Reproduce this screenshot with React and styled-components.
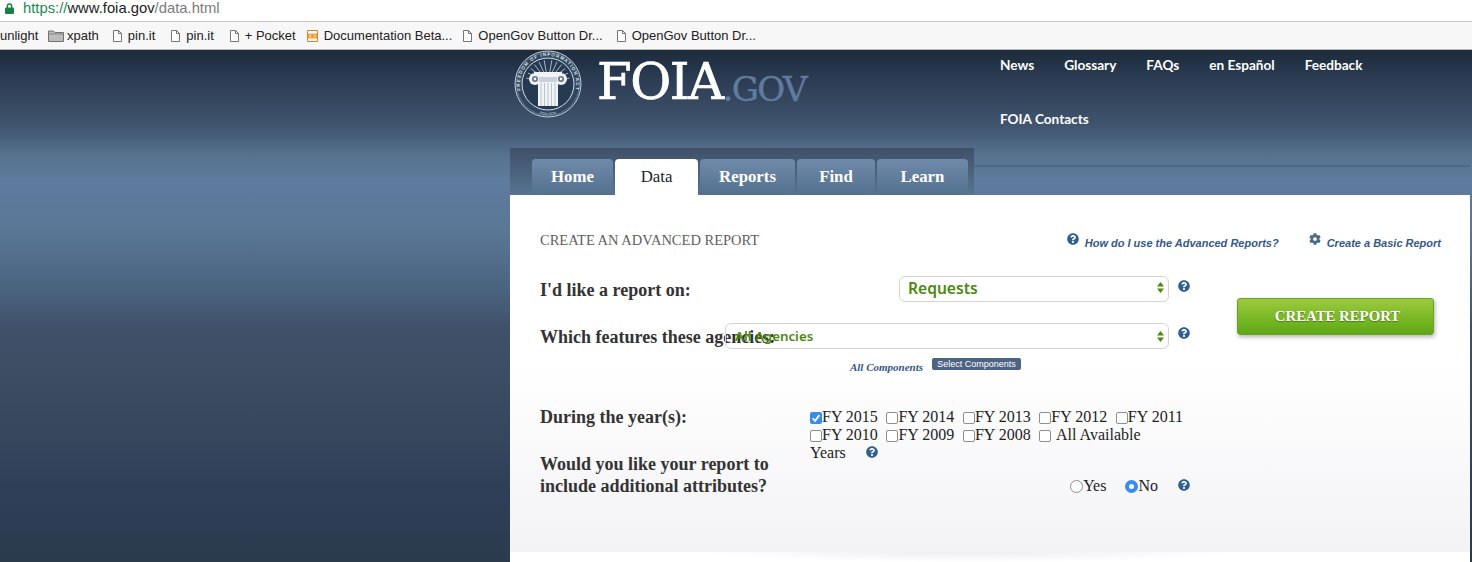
import React from 'react';
import styled, { createGlobalStyle } from 'styled-components';
import { FaQuestionCircle, FaCog } from 'react-icons/fa';

const SERIF = '"Liberation Serif", serif';
const SANS = '"Liberation Sans", sans-serif';
const GREEN = '#4c8a0e';

const years = ['FY 2015', 'FY 2014', 'FY 2013', 'FY 2012', 'FY 2011', 'FY 2010', 'FY 2009', 'FY 2008'];
const tabs = [
    { name: 'Home', width: 81 },
    { name: 'Data', width: 83, active: true },
    { name: 'Reports', width: 95 },
    { name: 'Find', width: 78 },
    { name: 'Learn', width: 91 },
];
const marks = [
    { name: 'xpath', folder: true, gap: 14 },
    { name: 'pin.it', gap: 16 },
    { name: 'pin.it', gap: 16 },
    { name: '+ Pocket', gap: 11 },
    { name: 'Documentation Beta...', code: true, gap: 11 },
    { name: 'OpenGov Button Dr...', gap: 14 },
    { name: 'OpenGov Button Dr...', gap: 0 },
];

const Seal = () => (
    <SealSvg viewBox="0 0 68 68">
        <defs>
            <path id="sealTop" d="M9.75 48A28 28 0 1 1 58.25 48" />
            <path id="sealBottom" d="M14 57.7A31 31 0 0 0 54 57.7" />
        </defs>
        <circle cx="34" cy="34" r="33" fill="#2f4660" stroke="#c4cfda" strokeWidth="1" />
        <circle cx="34" cy="34" r="31.5" fill="none" stroke="#8fa1b4" strokeWidth="0.5" />
        <circle cx="34" cy="34" r="26" fill="#263a52" stroke="#d5dde5" strokeWidth="1" />
        <text fontFamily={SANS} fontSize="4.6" fontWeight="700" fill="#dde3ea" letterSpacing="1" textAnchor="middle">
            <textPath href="#sealTop" startOffset="50%">FREEDOM OF INFORMATION ACT</textPath>
        </text>
        <text fontFamily={SANS} fontSize="3.5" fill="#dde3ea" textAnchor="middle">
            <textPath href="#sealBottom" startOffset="50%">FOIA.GOV</textPath>
        </text>
        <g stroke="#aebccb" strokeWidth="0.9">
            {[-80, -66, -52, -38, -24, -10, 10, 24, 38, 52, 66, 80].map(a => (
                <line key={a} x1="34" y1="32" x2="34" y2="10" transform={`rotate(${a} 34 32)`} />
            ))}
        </g>
        <path d="M20 22h28v5H20z" fill="#f1f3f5" />
        <circle cx="21" cy="29" r="6" fill="#f1f3f5" />
        <circle cx="47" cy="29" r="6" fill="#f1f3f5" />
        <circle cx="21" cy="29" r="3" fill="#5c7085" />
        <circle cx="47" cy="29" r="3" fill="#5c7085" />
        <circle cx="21" cy="29" r="1.4" fill="#f1f3f5" />
        <circle cx="47" cy="29" r="1.4" fill="#f1f3f5" />
        <path d="M25 27h18v5H25z" fill="#c8d1da" />
        <path d="M24 32h20v24H24z" fill="#f1f3f5" />
        <g stroke="#aab6c3" strokeWidth="0.8">
            <line x1="27" y1="33" x2="27" y2="56" />
            <line x1="30.5" y1="33" x2="30.5" y2="56" />
            <line x1="34" y1="33" x2="34" y2="56" />
            <line x1="37.5" y1="33" x2="37.5" y2="56" />
            <line x1="41" y1="33" x2="41" y2="56" />
        </g>
    </SealSvg>
);

const DocIcon = () => (
    <MarkSvg width="9" height="12" viewBox="0 0 9 12">
        <path d="M.5.5h5l3 3v8h-8zM5.5.5v3h3" fill="#fff" stroke="#666" strokeWidth="0.9" />
    </MarkSvg>
);

const FolderIcon = () => (
    <MarkSvg width="16" height="12" viewBox="0 0 16 12">
        <path d="M.5 11.5V1h5L7 2.5h8.5v9z" fill="#bdbdbd" stroke="#666" strokeWidth="0.9" />
        <path d="M1 4h14" stroke="#777" strokeWidth="0.8" />
    </MarkSvg>
);

const CodeIcon = () => (
    <MarkSvg width="11" height="12" viewBox="0 0 11 12">
        <path d="M.5.5h10v11H.5z" fill="#fff" stroke="#e8811f" />
        <path d="M1 3.5h9v5H1z" fill="#f09a3e" />
        <path d="M4 4.5L2.5 6 4 7.5M7 4.5L8.5 6 7 7.5" fill="none" stroke="#fff" strokeWidth="0.9" />
    </MarkSvg>
);

const LockIcon = () => (
    <svg width="9" height="11" viewBox="0 0 9 11">
        <path d="M2.3 5V3.200a2.200 2.200 0 0 1 4.400 0V5" fill="none" stroke="#1c8043" strokeWidth="1.4" />
        <rect y="4.5" width="9" height="6.5" rx="1" fill="#1c8043" />
    </svg>
);

const Spinner = () => (
    <Arrows viewBox="0 0 7 11" width="7" height="11">
        <path d="M3.5 0L7 4.5H0zM3.5 11L0 6.5h7z" fill={GREEN} />
    </Arrows>
);

const Tick = () => (
    <svg width="10" height="10" viewBox="0 0 10 10">
        <path d="M2.2 5.200l2 2.200 3.600-4.800" fill="none" stroke="#fff" strokeWidth="1.5" />
    </svg>
);

const Help = ({ tight }) => <HelpMark $tight={tight}><FaQuestionCircle /></HelpMark>;

const App = () => {
    return (
        <Screen>
            <Reset />
            <AddressBar>
                <LockIcon />
                <Url><Scheme>https://</Scheme>www.foia.gov<Path>/data.html</Path></Url>
            </AddressBar>
            <Bookmarks>
                <Clipped>unlight</Clipped>
                {marks.map((m, i) => (
                    <Mark key={i} $gap={m.gap} $tight={m.folder}>
                        {m.folder ? <FolderIcon /> : m.code ? <CodeIcon /> : <DocIcon />}
                        {m.name}
                    </Mark>
                ))}
            </Bookmarks>
            <Page>
                <Wrap>
                    <Header>
                        <Logo>
                            <Seal />
                            <Wordmark>FOIA<Gov>.GOV</Gov></Wordmark>
                        </Logo>
                        <Nav>
                            <NavLink>News</NavLink>
                            <NavLink>Glossary</NavLink>
                            <NavLink>FAQs</NavLink>
                            <NavLink>en Español</NavLink>
                            <NavLink>Feedback</NavLink>
                            <NavLink>FOIA Contacts</NavLink>
                        </Nav>
                    </Header>
                    <TabBar>
                        <TabStrip>
                            {tabs.map(t => (
                                <Tab key={t.name} $width={t.width} $active={t.active}>{t.name}</Tab>
                            ))}
                        </TabStrip>
                        <TabRule />
                    </TabBar>
                    <Panel>
                        <PanelTop>
                            <Title>CREATE AN ADVANCED REPORT</Title>
                            <TopLinks>
                                <TopLink $icon="#2f5f93"><FaQuestionCircle />How do I use the Advanced Reports?</TopLink>
                                <TopLink $icon="#4e6a8a"><FaCog />Create a Basic Report</TopLink>
                            </TopLinks>
                        </PanelTop>
                        <Columns>
                            <Form>
                                <SelectRow>
                                    <Label>I'd like a report on:</Label>
                                    <FakeSelect $width={270} $big>Requests<Spinner /></FakeSelect>
                                    <Help />
                                </SelectRow>
                                <SelectRow>
                                    <Label>Which features these agencies:</Label>
                                    <FakeSelect $width={444}>All Agencies<Spinner /></FakeSelect>
                                    <Help />
                                </SelectRow>
                                <Components>
                                    <AllComponents>All Components</AllComponents>
                                    <SmallButton>Select Components</SmallButton>
                                </Components>
                                <YearsRow>
                                    <YearsLabel>During the year(s):</YearsLabel>
                                    <YearList>
                                        {years.map((y, i) => (
                                            <React.Fragment key={y}>
                                                <Year><Box $on={i === 0}>{i === 0 && <Tick />}</Box>{y}</Year>{' '}
                                            </React.Fragment>
                                        ))}
                                        <Year><Box /></Year>All Available{' '}
                                        <NoWrap>Years<Help tight /></NoWrap>
                                    </YearList>
                                </YearsRow>
                                <AttrRow>
                                    <AttrLabel>Would you like your report to include additional attributes?</AttrLabel>
                                    <Radios>
                                        <RadioItem><Radio />Yes</RadioItem>
                                        <RadioItem><Radio $on />No</RadioItem>
                                        <Help />
                                    </Radios>
                                </AttrRow>
                            </Form>
                            <CreateButton>CREATE REPORT</CreateButton>
                        </Columns>
                    </Panel>
                    <Foot />
                </Wrap>
            </Page>
        </Screen>
    );
};

//styled components
const Reset = createGlobalStyle`
html, body {
    margin: 0;
    padding: 0;
    background: #fff;
}
body {
    font-family: ${SERIF};
}
`;

const Screen = styled.div`
width: 1472px;
height: 562px;
overflow: hidden;
display: flex;
flex-direction: column;
`;

const AddressBar = styled.div`
height: 21px;
display: flex;
align-items: center;
gap: 9px;
padding-left: 5px;
background: #fff;
border-bottom: 1px solid #c6c6c6;
svg{
    margin-top: -4px;
}
`;

const Url = styled.div`
font: 14.8px ${SANS};
color: #222;
margin-top: -6px;
`;

const Scheme = styled.span`
color: #1c8a55;
`;

const Path = styled.span`
color: #7b7b7b;
`;

const Bookmarks = styled.div`
height: 27px;
display: flex;
align-items: center;
background: #f7f7f7;
border-bottom: 1px solid #b9b9b9;
font: 13px ${SANS};
color: #222;
white-space: nowrap;
`;

const Clipped = styled.span`
width: 48px;
`;

const Mark = styled.span`
display: flex;
align-items: center;
gap: ${p => (p.$tight ? 3 : 6)}px;
margin-right: ${p => p.$gap}px;
`;

const MarkSvg = styled.svg`
flex: none;
`;

const Page = styled.div`
flex: 1;
padding-left: 510px;
padding-right: 2px;
background: linear-gradient(#1c2c3b 0, #2c3c54 30px, #42566f 78px, #56728f 105px, #5f7b9e 130px, #5a7796 180px, #4a647f 240px, #3f5068 280px, #38495f 370px, #2f3f58 440px, #2b3b4c 512px);
`;

const Wrap = styled.div`
width: 960px;
`;

const Header = styled.div`
height: 98px;
display: flex;
justify-content: space-between;
`;

const Logo = styled.div`
display: flex;
align-items: flex-start;
padding-left: 4px;
`;

const SealSvg = styled.svg`
width: 68px;
height: 68px;
flex: none;
`;

const Wordmark = styled.div`
font: 50px/1 "DejaVu Serif", serif;
color: #fff;
-webkit-text-stroke: 0.7px #fff;
margin: 7px 0 0 15px;
letter-spacing: -1.5px;
white-space: nowrap;
`;

const Gov = styled.span`
font-size: 34px;
color: #5f7b9e;
-webkit-text-stroke: 0.5px #5f7b9e;
letter-spacing: -1.6px;
vertical-align: -2px;
`;

const Nav = styled.div`
width: 470px;
display: flex;
flex-wrap: wrap;
align-content: flex-start;
column-gap: 30px;
row-gap: 24px;
`;

const NavLink = styled.a`
font: 700 13.6px/30px Lato, sans-serif;
color: #fff;
`;

const TabBar = styled.div`
display: flex;
height: 47px;
`;

const TabStrip = styled.div`
width: 464px;
padding: 11px 0 0 22px;
box-sizing: border-box;
display: flex;
gap: 2px;
background: linear-gradient(#3f5068, #587491);
`;

const Tab = styled.div`
width: ${p => p.$width}px;
height: 36px;
border-radius: 4px 4px 0 0;
display: flex;
align-items: center;
justify-content: center;
font-size: 16.8px;
font-weight: ${p => (p.$active ? 400 : 700)};
color: ${p => (p.$active ? '#1c2430' : '#fff')};
background: ${p => (p.$active ? '#fff' : 'linear-gradient(#708baa, #54708f)')};
`;

const TabRule = styled.div`
flex: 1;
margin-top: 17px;
border-top: 2px solid #4d6785;
`;

const Panel = styled.div`
height: 357px;
box-sizing: border-box;
padding: 36px 29px 0 30px;
background: linear-gradient(#fff 0, #fff 170px, #f3f3f6 100%);
`;

const PanelTop = styled.div`
display: flex;
justify-content: space-between;
align-items: center;
height: 20px;
`;

const Title = styled.h2`
margin: -2px 0 0;
font: 400 14.5px ${SERIF};
color: #5f5f5f;
`;

const TopLinks = styled.div`
display: flex;
gap: 30px;
margin-top: 4px;
`;

const TopLink = styled.a`
display: flex;
align-items: center;
gap: 6px;
font: italic 700 11px ${SANS};
color: #34588a;
svg{
    width: 12px;
    height: 12px;
    margin-top: -8px;
    color: ${p => p.$icon};
}
`;

const Columns = styled.div`
display: flex;
align-items: flex-start;
`;

const Form = styled.div`
width: 650px;
`;

const Label = styled.label`
font: 700 18px ${SERIF};
color: #333;
white-space: nowrap;
width: 185px;
margin-top: 2px;
`;

const SelectRow = styled.div`
display: flex;
align-items: center;
margin-top: 21px;
height: 26px;
&:first-child{
    margin-top: 25px;
}
`;

const FakeSelect = styled.div`
margin-left: auto;
width: ${p => p.$width}px;
height: 26px;
box-sizing: border-box;
border: 1px solid #d4d4d4;
border-radius: 6px;
display: flex;
align-items: center;
justify-content: space-between;
padding: 0 4px ${p => (p.$big ? 3 : 0)}px ${p => (p.$big ? 8 : 9)}px;
font: 600 ${p => (p.$big ? 15.6 : 13.3)}px "Noto Sans", sans-serif;
color: ${GREEN};
`;

const Arrows = styled.svg`
flex: none;
`;

const HelpMark = styled.span`
display: inline-flex;
margin-left: ${p => (p.$tight ? 20 : 9)}px;
color: #2f5f93;
font-size: 12px;
svg{
    margin-top: -6px;
    display: block;
}
`;

const Components = styled.div`
display: flex;
justify-content: flex-end;
align-items: center;
gap: 9px;
padding-right: 169px;
margin-top: 6px;
`;

const AllComponents = styled.a`
font: italic 700 11px ${SERIF};
color: #34588a;
margin-top: 6px;
`;

const SmallButton = styled.button`
width: 89px;
height: 12px;
padding: 0;
border: none;
border-radius: 2px;
background: #4c6383;
color: #fff;
font: 400 9px ${SANS};
white-space: nowrap;
`;

const YearsRow = styled.div`
display: flex;
margin-top: 35px;
`;

const YearsLabel = styled.div`
font: 700 18px/18px ${SERIF};
color: #333;
width: 270px;
`;

const YearList = styled.div`
width: 380px;
font: 16px/18px ${SERIF};
color: #222;
`;

const Year = styled.span`
margin-right: 4.6px;
`;

const Box = styled.span`
display: inline-flex;
vertical-align: -2px;
width: 12px;
height: 12px;
box-sizing: border-box;
border-radius: 2px;
border: ${p => (p.$on ? 'none' : '1px solid #8f8f8f')};
background: ${p => (p.$on ? '#3a8bf0' : '#fff')};
align-items: center;
justify-content: center;
svg{
    width: 12px;
    height: 12px;
}
`;

const NoWrap = styled.span`
white-space: nowrap;
`;

const AttrRow = styled.div`
display: flex;
justify-content: space-between;
align-items: flex-end;
margin-top: -9px;
`;

const AttrLabel = styled.div`
width: 250px;
font: 700 18px/22px ${SERIF};
color: #333;
`;

const Radios = styled.div`
display: flex;
align-items: center;
font: 16px/18px ${SERIF};
color: #222;
margin-bottom: 2px;
svg{
    margin-top: -2px;
}
`;

const RadioItem = styled.span`
display: flex;
align-items: center;
margin-right: 19px;
&:nth-child(2){
    margin-right: 11px;
}
`;

const Radio = styled.span`
width: 13px;
height: 13px;
box-sizing: border-box;
border-radius: 50%;
border: ${p => (p.$on ? '4.5px solid #3a8bf0' : '1px solid #8f8f8f')};
background: #fff;
`;

const CreateButton = styled.button`
width: 197px;
height: 37px;
margin: 47px 0 0 47px;
padding: 0 0 0 4px;
flex: none;
border: 1px solid #6c9f2e;
border-radius: 3px;
background: linear-gradient(#9ccb3c, #5ea914);
box-shadow: 1px 2px 4px rgba(0, 0, 0, 0.3);
color: #fff;
font: 700 14.8px ${SERIF};
text-shadow: 0 1px 1px rgba(0, 0, 0, 0.35);
`;

const Foot = styled.div`
height: 10px;
background: radial-gradient(ellipse 270px 10px at 460px 0, rgba(0, 0, 0, 0.07), rgba(0, 0, 0, 0) 100%), #fff;
`;

export default App;
